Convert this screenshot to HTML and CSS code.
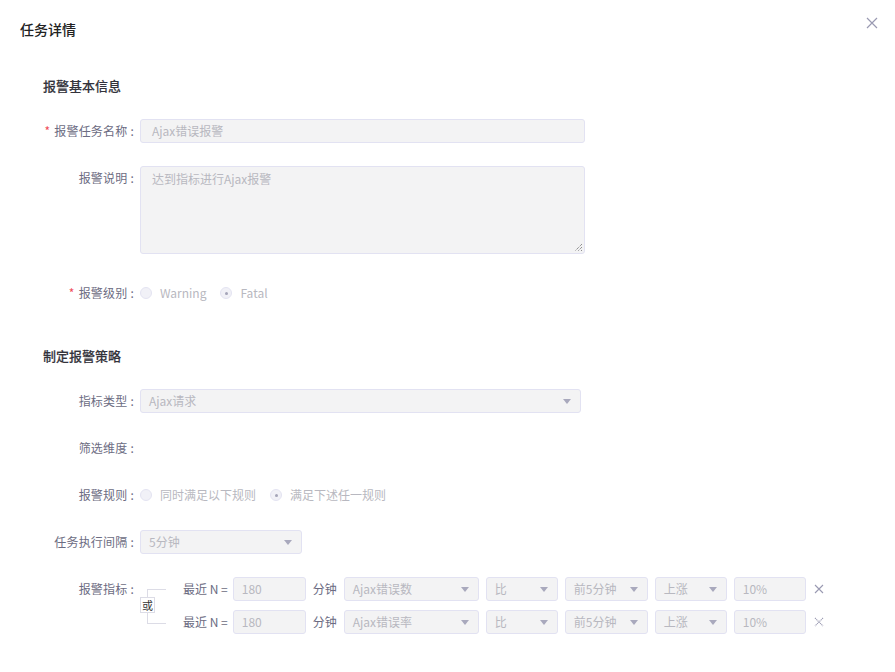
FILE: index.html
```html
<!DOCTYPE html>
<html lang="zh">
<head>
<meta charset="utf-8">
<title>任务详情</title>
<link rel="stylesheet" href="styles.css">
</head>
<body>
<div class="dialog">
  <div class="header">
    <span class="title">任务详情</span>
    <span class="close"><svg width="12" height="12" viewBox="0 0 12 12"><path d="M1 1L11 11M11 1L1 11" stroke="#9a9ab2" stroke-width="1.2" fill="none"/></svg></span>
  </div>

  <div class="section-title">报警基本信息</div>

  <div class="row">
    <div class="label"><span class="req">*</span>报警任务名称<span class="colon">:</span></div>
    <div class="field input w445 wide-pad">Ajax错误报警</div>
  </div>
  <div class="row row-ta">
    <div class="label">报警说明<span class="colon">:</span></div>
    <div class="field textarea w445 wide-pad">达到指标进行Ajax报警
      <svg class="grip" width="9" height="9" viewBox="0 0 9 9"><path d="M8 1L1 8M8 4L4 8M8 7L7 8" stroke="#555" stroke-width="0.9" stroke-dasharray="1 1" fill="none"/></svg>
    </div>
  </div>
  <div class="row row-radio">
    <div class="label"><span class="req">*</span>报警级别<span class="colon">:</span></div>
    <div class="radios">
      <span class="radio"><i class="dot"></i>Warning</span>
      <span class="radio"><i class="dot on"></i>Fatal</span>
    </div>
  </div>

  <div class="section-title sec2">制定报警策略</div>

  <div class="row">
    <div class="label">指标类型<span class="colon">:</span></div>
    <div class="field select w441">Ajax请求<i class="arrow"></i></div>
  </div>
  <div class="row">
    <div class="label">筛选维度<span class="colon">:</span></div>
  </div>
  <div class="row">
    <div class="label">报警规则<span class="colon">:</span></div>
    <div class="radios">
      <span class="radio"><i class="dot"></i>同时满足以下规则</span>
      <span class="radio"><i class="dot on"></i>满足下述任一规则</span>
    </div>
  </div>
  <div class="row">
    <div class="label">任务执行间隔<span class="colon">:</span></div>
    <div class="field select w162">5分钟<i class="arrow"></i></div>
  </div>
  <div class="row row-metrics">
    <div class="label">报警指标<span class="colon">:</span></div>
    <div class="metrics">
      <div class="bracket"><span class="or">或</span></div>
      <div class="metric-rows">
        <div class="metric">
          <span class="txt">最近 N =</span>
          <div class="field input w73">180</div>
          <span class="txt">分钟</span>
          <div class="field select w135">Ajax错误数<i class="arrow"></i></div>
          <div class="field select w72">比<i class="arrow"></i></div>
          <div class="field select w83">前5分钟<i class="arrow"></i></div>
          <div class="field select w72">上涨<i class="arrow"></i></div>
          <div class="field input w72">10%</div>
          <span class="del"><svg width="10" height="10" viewBox="0 0 10 10"><path d="M1 1L9 9M9 1L1 9" stroke="#9a9ab2" stroke-width="1.1" fill="none"/></svg></span>
        </div>
        <div class="metric">
          <span class="txt">最近 N =</span>
          <div class="field input w73">180</div>
          <span class="txt">分钟</span>
          <div class="field select w135">Ajax错误率<i class="arrow"></i></div>
          <div class="field select w72">比<i class="arrow"></i></div>
          <div class="field select w83">前5分钟<i class="arrow"></i></div>
          <div class="field select w72">上涨<i class="arrow"></i></div>
          <div class="field input w72">10%</div>
          <span class="del"><svg width="10" height="10" viewBox="0 0 10 10"><path d="M1 1L9 9M9 1L1 9" stroke="#9a9ab2" stroke-width="1.1" fill="none" stroke-dasharray="1.2 0.6"/></svg></span>
        </div>
      </div>
    </div>
  </div>
</div>
</body>
</html>
```

FILE: styles.css
```css
* { box-sizing: border-box; }
html, body { margin: 0; padding: 0; background: #fff; }
body {
  font-family: "Noto Sans CJK SC", "Noto Sans", sans-serif;
  font-size: 12px;
  color: #333;
}
.dialog {
  position: relative;
  width: 895px;
  height: 672px;
  padding: 0;
}
.header {
  height: 58px;
  padding: 19px 0 0 20px;
}
.title {
  font-size: 14px;
  line-height: 20px;
  color: #222;
  font-weight: 500;
}
.close {
  position: absolute;
  top: 17px;
  left: 866px;
  width: 12px;
  height: 12px;
  display: block;
}
.close svg { display: block; }
.section-title {
  margin: 18px 0 23px 43px;
  font-size: 13px;
  line-height: 20px;
  font-weight: 500;
  color: #33333b;
  -webkit-text-stroke: 0.15px #33333b;
}
.section-title.sec2 { margin-top: 41px; }
.row {
  display: flex;
  align-items: flex-start;
  margin-bottom: 23px;
  min-height: 24px;
}
.row-ta { margin-bottom: 27px; }
.row-radio { margin-bottom: 0; }
.label {
  width: 134px;
  flex: none;
  text-align: right;
  line-height: 24px;
  color: #6c6c82;
  margin-right: 6px;
  letter-spacing: 0.2px;
}
.colon { margin-left: 3px; }
.req {
  color: #f04d5a;
  margin-right: 4px;
}
.field {
  position: relative;
  height: 24px;
  line-height: 22px;
  padding: 0 8px;
  background: #f3f3f4;
  border: 1px solid #e2e2f2;
  border-radius: 3px;
  color: #b8b8c0;
  flex: none;
}
.wide-pad { padding-left: 11px; }
.textarea {
  height: 88px;
  padding-top: 5px;
  line-height: 14px;
}
.grip { position: absolute; right: 1px; bottom: 1px; }
.w445 { width: 445px; }
.w441 { width: 441px; }
.w162 { width: 162px; }
.w73 { width: 73px; }
.w135 { width: 135px; }
.w72 { width: 72px; }
.w83 { width: 83px; }
.arrow {
  position: absolute;
  right: 9px;
  top: 9px;
  width: 0;
  height: 0;
  border-left: 4.5px solid transparent;
  border-right: 4.5px solid transparent;
  border-top: 5px solid #a9a9bd;
}
.radios {
  display: flex;
  align-items: center;
  height: 24px;
  color: #b8b8c0;
  gap: 14px;
}
.radio {
  display: flex;
  align-items: center;
  line-height: 24px;
}
.dot {
  width: 12px;
  height: 12px;
  border-radius: 50%;
  border: 1px solid #e4e4f2;
  background: #f1f1f7;
  margin-right: 8px;
  position: relative;
}
.dot.on::after {
  content: "";
  position: absolute;
  left: 3.5px;
  top: 3.5px;
  width: 3px;
  height: 3px;
  border-radius: 50%;
  background: #a4a4b8;
}
.row-metrics { margin-bottom: 0; }
.metrics {
  display: flex;
  align-items: center;
}
.bracket {
  position: relative;
  width: 43px;
  height: 57px;
  flex: none;
  align-self: stretch;
}
.bracket::before {
  content: "";
  position: absolute;
  left: 7px;
  top: 12px;
  width: 18px;
  height: 33px;
  border: 1px solid #dcdce6;
  border-right: none;
}
.or {
  position: absolute;
  left: 0;
  top: 20px;
  width: 15px;
  height: 16px;
  line-height: 14px;
  text-align: center;
  background: #fff;
  border: 1px solid #dcdce6;
  color: #333;
  font-size: 11px;
}
.metric-rows {
  display: flex;
  flex-direction: column;
  gap: 9px;
}
.metric {
  display: flex;
  align-items: center;
  gap: 7px;
  height: 24px;
}
.metric .txt {
  color: #6c6c82;
  line-height: 24px;
}
.metric .txt:first-child { margin-right: -2px; }
.del {
  margin-left: 1px;
  width: 10px;
  height: 10px;
  display: block;
}
.del svg { display: block; }
```
